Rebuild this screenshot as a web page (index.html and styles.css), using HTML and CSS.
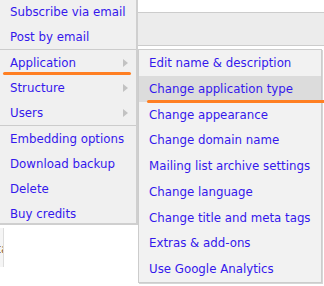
FILE: index.html
```html
<!DOCTYPE html>
<html>
<head>
<meta charset="utf-8">
<link rel="stylesheet" href="styles.css">
</head>
<body>
<div class="page">
  <div class="topbar"></div>
  <div class="band"></div>
  <div class="content">
    <div class="side"><span class="side-text">Data</span></div>
  </div>
</div>

<ul class="menu">
  <li class="item">Subscribe via email</li>
  <li class="item">Post by email</li>
  <li class="sep"></li>
  <li class="item has-sub">Application<span class="arrow"></span></li>
  <li class="item has-sub">Structure<span class="arrow"></span></li>
  <li class="item has-sub">Users<span class="arrow"></span></li>
  <li class="sep"></li>
  <li class="item">Embedding options</li>
  <li class="item">Download backup</li>
  <li class="item">Delete</li>
  <li class="item last">Buy credits</li>
</ul>

<ul class="submenu">
  <li class="sub-item">Edit name &amp; description</li>
  <li class="sub-item active">Change application type</li>
  <li class="sub-item">Change appearance</li>
  <li class="sub-item">Change domain name</li>
  <li class="sub-item">Mailing list archive settings</li>
  <li class="sub-item">Change language</li>
  <li class="sub-item">Change title and meta tags</li>
  <li class="sub-item">Extras &amp; add-ons</li>
  <li class="sub-item">Use Google Analytics</li>
</ul>

<div class="mark mark-app"></div>
<div class="mark mark-type"></div>
</body>
</html>
```

FILE: styles.css
```css
html, body {
  margin: 0;
  padding: 0;
}
body {
  width: 324px;
  height: 286px;
  overflow: hidden;
  position: relative;
  background: #ffffff;
  font-family: "DejaVu Sans", Verdana, sans-serif;
  font-size: 11.8px;
}
.page {
  display: flex;
  flex-direction: column;
}
.topbar {
  height: 12px;
}
.band {
  height: 32px;
  background: #ececec;
  border-top: 1px solid #cccccc;
  border-bottom: 1px solid #cccccc;
}
.content {
  padding-top: 182px;
}
.side {
  width: 3px;
  height: 39px;
  background: #f5f5f5;
  border-right: 1px solid #dddddd;
  overflow: hidden;
  position: relative;
}
.side-text {
  display: block;
  white-space: nowrap;
  margin-left: -20px;
  margin-top: 14px;
  color: #8a5a2e;
  font-size: 11.8px;
}

.menu {
  position: absolute;
  left: 0;
  top: -1px;
  width: 136px;
  margin: 0;
  padding: 0;
  list-style: none;
  background: #f0f0f0;
  border-right: 2px solid #cfcfcf;
  border-bottom: 2px solid #cfcfcf;
}
.item {
  position: relative;
  box-sizing: border-box;
  height: 25px;
  line-height: 25px;
  padding-top: 1px;
  padding-left: 10px;
  color: #3418ec;
  white-space: nowrap;
}
.item.last {
  height: 22px;
  line-height: 22px;
  padding-top: 2px;
}
.sep {
  height: 1px;
  background: #cccccc;
}
.arrow {
  position: absolute;
  left: 123px;
  top: 9px;
  width: 0;
  height: 0;
  border-left: 5px solid #c2c2c2;
  border-top: 4px solid transparent;
  border-bottom: 4px solid transparent;
}

.submenu {
  position: absolute;
  left: 138px;
  top: 49px;
  width: 182px;
  margin: 0;
  padding: 0;
  list-style: none;
  background: #f2f2f2;
  border: 1px solid #cccccc;
  box-shadow: 1px 1px 0 #d6d6d6;
}
.sub-item {
  box-sizing: border-box;
  height: 25.75px;
  line-height: 25.75px;
  padding-top: 1px;
  padding-left: 10px;
  color: #3418ec;
  white-space: nowrap;
}
.sub-item.active {
  background: #dcdcdc;
}

.mark {
  position: absolute;
  height: 3px;
  border-radius: 2px;
  background: #ff7f22;
}
.mark-app {
  left: 3px;
  top: 71.5px;
  width: 128px;
}
.mark-type {
  left: 147px;
  top: 100px;
  width: 190px;
}
```
